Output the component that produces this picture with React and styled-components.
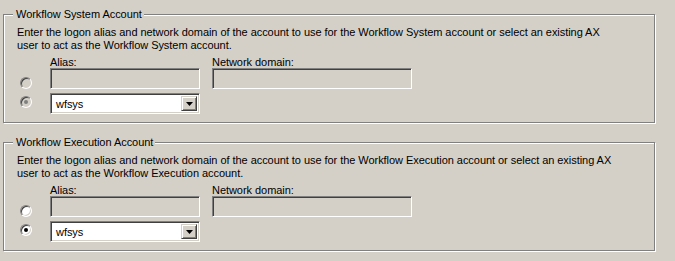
import React from "react";
import styled, { createGlobalStyle } from "styled-components";

const GlobalStyle = createGlobalStyle`
    html, body {
        margin: 0;
        padding: 0;
        background: #d4d0c8;
    }
    body {
        font-family: "Liberation Sans", Arial, sans-serif;
        font-size: 11px;
        letter-spacing: -0.05px;
        color: #000;
    }
`;

const accounts = [
    { title: "Workflow System Account", name: "Workflow System", enabled: false },
    { title: "Workflow Execution Account", name: "Workflow Execution", enabled: true },
];

function Radio({ checked, disabled }) {
    return <RadioCircle $checked={checked} $disabled={disabled} />;
}

function AccountGroup({ title, name, enabled }) {
    return (
        <GroupBox>
            <Legend>{title}</Legend>
            <Description>
                Enter the logon alias and network domain of the account to use for the {name} account or select an existing AX
                <br />
                user to act as the {name} account.
            </Description>
            <FormGrid>
                <span />
                <FieldLabel>Alias:</FieldLabel>
                <FieldLabel>Network domain:</FieldLabel>

                <RadioCell $first>
                    <Radio checked={false} disabled={!enabled} />
                </RadioCell>
                <TextBox />
                <TextBox $wide />

                <RadioCell>
                    <Radio checked disabled={!enabled} />
                </RadioCell>
                <ComboBox>
                    <ComboText>wfsys</ComboText>
                    <DropButton>
                        <svg width="7" height="4" viewBox="0 0 7 4">
                            <path d="M0 0h7L3.5 4z" fill="#000" />
                        </svg>
                    </DropButton>
                </ComboBox>
                <span />
            </FormGrid>
        </GroupBox>
    );
}

export default function App() {
    return (
        <>
            <GlobalStyle />
            <Page>
                {accounts.map((a) => (
                    <AccountGroup key={a.title} {...a} />
                ))}
            </Page>
        </>
    );
}

const Page = styled.div`
    width: 675px;
    height: 261px;
    box-sizing: border-box;
    padding: 14px 0 0 3px;
    display: flex;
    flex-direction: column;
    gap: 19px;
`;

const GroupBox = styled.div`
    position: relative;
    box-sizing: border-box;
    width: 652px;
    height: 109px;
    border: 1px solid #808080;
    box-shadow: inset 1px 1px 0 #fff, 1px 1px 0 #fff;
    padding: 11px 0 0 13px;
`;

const Legend = styled.span`
    position: absolute;
    top: -7px;
    left: 9px;
    padding: 0 2px 0 3px;
    background: #d4d0c8;
    line-height: 13px;
    white-space: nowrap;
`;

const Description = styled.p`
    margin: 0;
    line-height: 13px;
    white-space: nowrap;
`;

const FormGrid = styled.div`
    display: grid;
    grid-template-columns: 12px 150px 200px;
    grid-template-rows: 11px 21px 21px;
    column-gap: 18px;
    row-gap: 0;
    margin: 5px 0 0 3px;
    & > :nth-child(3n + 3) {
        margin-left: -6px;
    }
    & > :nth-child(n + 7) {
        margin-top: 4px;
    }
`;

const FieldLabel = styled.span`
    line-height: 11px;
    white-space: nowrap;
`;

const RadioCell = styled.div`
    display: flex;
    align-items: ${(p) => (p.$first ? "flex-end" : "center")};
`;

const RadioCircle = styled.span`
    position: relative;
    display: block;
    box-sizing: border-box;
    width: 12px;
    height: 12px;
    border-radius: 50%;
    border: 1px solid;
    border-color: #808080 #fff #fff #808080;
    box-shadow: inset 1px 1px 0 #404040, inset -1px -1px 0 #d4d0c8;
    background: ${(p) => (p.$disabled ? "#d4d0c8" : "#fff")};
    &::after {
        content: "";
        display: ${(p) => (p.$checked ? "block" : "none")};
        position: absolute;
        left: 3px;
        top: 3px;
        width: 4px;
        height: 4px;
        border-radius: 50%;
        background: ${(p) => (p.$disabled ? "#808080" : "#000")};
    }
`;

const sunken = `
    box-sizing: border-box;
    border: 1px solid;
    border-color: #808080 #fff #fff #808080;
    box-shadow: inset 1px 1px 0 #404040, inset -1px -1px 0 #d4d0c8;
`;

const TextBox = styled.div`
    ${sunken}
    height: 21px;
    width: ${(p) => (p.$wide ? "200px" : "150px")};
    background: #d4d0c8;
`;

const ComboBox = styled.div`
    ${sunken}
    height: 21px;
    width: 150px;
    background: #fff;
    display: flex;
    align-items: stretch;
    padding: 2px;
`;

const ComboText = styled.span`
    flex: 1;
    padding-left: 3px;
    line-height: 17px;
`;

const DropButton = styled.span`
    box-sizing: border-box;
    width: 16px;
    background: #d4d0c8;
    border: 1px solid;
    border-color: #d4d0c8 #404040 #404040 #d4d0c8;
    box-shadow: inset 1px 1px 0 #fff, inset -1px -1px 0 #808080;
    display: flex;
    align-items: center;
    justify-content: center;
`;
